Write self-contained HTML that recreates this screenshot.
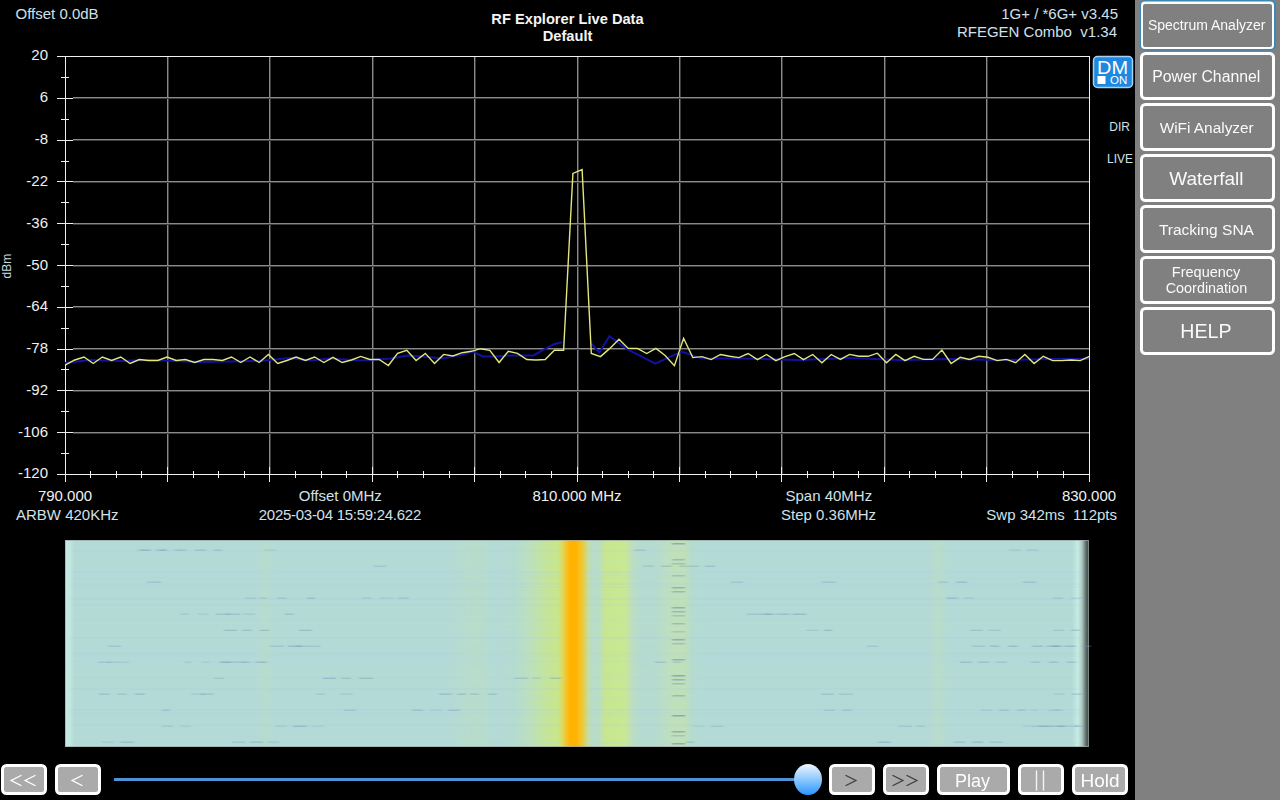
<!DOCTYPE html>
<html><head><meta charset="utf-8"><style>
html,body{margin:0;padding:0;background:#000;width:1280px;height:800px;overflow:hidden}
svg{display:block;font-family:"Liberation Sans",sans-serif}
text{white-space:pre}
</style></head><body>
<svg width="1280" height="800" viewBox="0 0 1280 800">
<defs>
<filter id="blur" x="-10%" y="-200%" width="120%" height="500%"><feGaussianBlur stdDeviation="1.2 0.5"/></filter>
<linearGradient id="wf" x1="0" x2="1" y1="0" y2="0"><stop offset="0.0" stop-color="#c4ece4"/><stop offset="0.0048828125" stop-color="#c0e8e0"/><stop offset="0.0087890625" stop-color="#b3dad6"/><stop offset="0.1865234375" stop-color="#b3dad6"/><stop offset="0.1953125" stop-color="#b6dcce"/><stop offset="0.2041015625" stop-color="#b3dad6"/><stop offset="0.3759765625" stop-color="#b3dad6"/><stop offset="0.3955078125" stop-color="#b8dccc"/><stop offset="0.4052734375" stop-color="#b8dccc"/><stop offset="0.419921875" stop-color="#b3dad6"/><stop offset="0.439453125" stop-color="#b5dbd0"/><stop offset="0.4541015625" stop-color="#bce0bc"/><stop offset="0.46875" stop-color="#c4e49c"/><stop offset="0.4814453125" stop-color="#c8e68a"/><stop offset="0.4853515625" stop-color="#dcdc60"/><stop offset="0.4892578125" stop-color="#f4c430"/><stop offset="0.4931640625" stop-color="#ffb400"/><stop offset="0.4990234375" stop-color="#ffb200"/><stop offset="0.5029296875" stop-color="#f8c020"/><stop offset="0.5068359375" stop-color="#e0d050"/><stop offset="0.5107421875" stop-color="#c8dca0"/><stop offset="0.5146484375" stop-color="#b8dcc8"/><stop offset="0.5205078125" stop-color="#b8dcc8"/><stop offset="0.52734375" stop-color="#c6e690"/><stop offset="0.546875" stop-color="#cae892"/><stop offset="0.5537109375" stop-color="#bcdec0"/><stop offset="0.5615234375" stop-color="#b5dbd0"/><stop offset="0.576171875" stop-color="#b5dbd0"/><stop offset="0.5927734375" stop-color="#bfe0bc"/><stop offset="0.6044921875" stop-color="#c0e0b8"/><stop offset="0.6123046875" stop-color="#b5dbd0"/><stop offset="0.625" stop-color="#b3dad6"/><stop offset="0.8427734375" stop-color="#b3dad6"/><stop offset="0.8525390625" stop-color="#b9ddca"/><stop offset="0.8623046875" stop-color="#b3dad6"/><stop offset="0.9833984375" stop-color="#b3dad6"/><stop offset="0.9892578125" stop-color="#c6ece4"/><stop offset="0.9931640625" stop-color="#a8c8c0"/><stop offset="0.9970703125" stop-color="#606c6a"/><stop offset="1.0" stop-color="#3a4240"/></linearGradient>
<linearGradient id="knob" x1="0" x2="0" y1="0" y2="1"><stop offset="0" stop-color="#eef6ff"/><stop offset="0.5" stop-color="#8cc8ff"/><stop offset="1" stop-color="#2a96ff"/></linearGradient>
</defs>
<rect x="0" y="0" width="1135" height="800" fill="#000"/>
<rect x="1135" y="0" width="145" height="800" fill="#808080"/>
<!-- header texts -->
<g font-size="15" fill="#d2e0ea">
<text x="15.5" y="19">Offset 0.0dB</text>
<text x="1118" y="19" text-anchor="end">1G+ / *6G+ v3.45</text>
<text x="1117" y="37" text-anchor="end">RFEGEN Combo  v1.34</text>
</g>
<g font-size="14.67" font-weight="bold" fill="#f4f4f4" text-anchor="middle">
<text x="567.5" y="24">RF Explorer Live Data</text>
<text x="567.5" y="40.5">Default</text>
</g>
<!-- grid -->
<rect x="167" y="57" width="1" height="417" fill="#8a8a8a"/><rect x="168" y="57" width="1" height="417" fill="#3c3c3c"/><rect x="269" y="57" width="1" height="417" fill="#8a8a8a"/><rect x="270" y="57" width="1" height="417" fill="#3c3c3c"/><rect x="372" y="57" width="1" height="417" fill="#8a8a8a"/><rect x="373" y="57" width="1" height="417" fill="#3c3c3c"/><rect x="474" y="57" width="1" height="417" fill="#8a8a8a"/><rect x="475" y="57" width="1" height="417" fill="#3c3c3c"/><rect x="577" y="57" width="1" height="417" fill="#8a8a8a"/><rect x="578" y="57" width="1" height="417" fill="#3c3c3c"/><rect x="679" y="57" width="1" height="417" fill="#8a8a8a"/><rect x="680" y="57" width="1" height="417" fill="#3c3c3c"/><rect x="781" y="57" width="1" height="417" fill="#8a8a8a"/><rect x="782" y="57" width="1" height="417" fill="#3c3c3c"/><rect x="884" y="57" width="1" height="417" fill="#8a8a8a"/><rect x="885" y="57" width="1" height="417" fill="#3c3c3c"/><rect x="986" y="57" width="1" height="417" fill="#8a8a8a"/><rect x="987" y="57" width="1" height="417" fill="#3c3c3c"/><rect x="73" y="97" width="1016" height="1" fill="#8a8a8a"/><rect x="73" y="98" width="1016" height="1" fill="#3c3c3c"/><rect x="73" y="139" width="1016" height="1" fill="#8a8a8a"/><rect x="73" y="140" width="1016" height="1" fill="#3c3c3c"/><rect x="73" y="181" width="1016" height="1" fill="#8a8a8a"/><rect x="73" y="182" width="1016" height="1" fill="#3c3c3c"/><rect x="73" y="223" width="1016" height="1" fill="#8a8a8a"/><rect x="73" y="224" width="1016" height="1" fill="#3c3c3c"/><rect x="73" y="265" width="1016" height="1" fill="#8a8a8a"/><rect x="73" y="266" width="1016" height="1" fill="#3c3c3c"/><rect x="73" y="306" width="1016" height="1" fill="#8a8a8a"/><rect x="73" y="307" width="1016" height="1" fill="#3c3c3c"/><rect x="73" y="348" width="1016" height="1" fill="#8a8a8a"/><rect x="73" y="349" width="1016" height="1" fill="#3c3c3c"/><rect x="73" y="390" width="1016" height="1" fill="#8a8a8a"/><rect x="73" y="391" width="1016" height="1" fill="#3c3c3c"/><rect x="73" y="432" width="1016" height="1" fill="#8a8a8a"/><rect x="73" y="433" width="1016" height="1" fill="#3c3c3c"/>
<g stroke="#f0f0f0" stroke-width="1">
<line x1="57" x2="1089.5" y1="56.5" y2="56.5"/>
<line x1="65.5" x2="65.5" y1="56" y2="482"/>
<line x1="65" x2="1089.5" y1="474.5" y2="474.5"/>
<line x1="1089.5" x2="1089.5" y1="56" y2="482"/>
<line x1="57" x2="73" y1="56.5" y2="56.5"/><line x1="61" x2="69" y1="77.5" y2="77.5"/><line x1="57" x2="73" y1="98.5" y2="98.5"/><line x1="61" x2="69" y1="119.5" y2="119.5"/><line x1="57" x2="73" y1="140.5" y2="140.5"/><line x1="61" x2="69" y1="161.5" y2="161.5"/><line x1="57" x2="73" y1="181.5" y2="181.5"/><line x1="61" x2="69" y1="202.5" y2="202.5"/><line x1="57" x2="73" y1="223.5" y2="223.5"/><line x1="61" x2="69" y1="244.5" y2="244.5"/><line x1="57" x2="73" y1="265.5" y2="265.5"/><line x1="61" x2="69" y1="286.5" y2="286.5"/><line x1="57" x2="73" y1="307.5" y2="307.5"/><line x1="61" x2="69" y1="328.5" y2="328.5"/><line x1="57" x2="73" y1="349.5" y2="349.5"/><line x1="61" x2="69" y1="369.5" y2="369.5"/><line x1="57" x2="73" y1="390.5" y2="390.5"/><line x1="61" x2="69" y1="411.5" y2="411.5"/><line x1="57" x2="73" y1="432.5" y2="432.5"/><line x1="61" x2="69" y1="453.5" y2="453.5"/><line x1="57" x2="73" y1="474.5" y2="474.5"/><line x1="65.5" x2="65.5" y1="467" y2="482"/><line x1="90.5" x2="90.5" y1="471" y2="478"/><line x1="116.5" x2="116.5" y1="471" y2="478"/><line x1="141.5" x2="141.5" y1="471" y2="478"/><line x1="167.5" x2="167.5" y1="467" y2="482"/><line x1="193.5" x2="193.5" y1="471" y2="478"/><line x1="218.5" x2="218.5" y1="471" y2="478"/><line x1="244.5" x2="244.5" y1="471" y2="478"/><line x1="269.5" x2="269.5" y1="467" y2="482"/><line x1="295.5" x2="295.5" y1="471" y2="478"/><line x1="321.5" x2="321.5" y1="471" y2="478"/><line x1="346.5" x2="346.5" y1="471" y2="478"/><line x1="372.5" x2="372.5" y1="467" y2="482"/><line x1="397.5" x2="397.5" y1="471" y2="478"/><line x1="423.5" x2="423.5" y1="471" y2="478"/><line x1="449.5" x2="449.5" y1="471" y2="478"/><line x1="474.5" x2="474.5" y1="467" y2="482"/><line x1="500.5" x2="500.5" y1="471" y2="478"/><line x1="525.5" x2="525.5" y1="471" y2="478"/><line x1="551.5" x2="551.5" y1="471" y2="478"/><line x1="577.5" x2="577.5" y1="467" y2="482"/><line x1="602.5" x2="602.5" y1="471" y2="478"/><line x1="628.5" x2="628.5" y1="471" y2="478"/><line x1="653.5" x2="653.5" y1="471" y2="478"/><line x1="679.5" x2="679.5" y1="467" y2="482"/><line x1="705.5" x2="705.5" y1="471" y2="478"/><line x1="730.5" x2="730.5" y1="471" y2="478"/><line x1="756.5" x2="756.5" y1="471" y2="478"/><line x1="781.5" x2="781.5" y1="467" y2="482"/><line x1="807.5" x2="807.5" y1="471" y2="478"/><line x1="833.5" x2="833.5" y1="471" y2="478"/><line x1="858.5" x2="858.5" y1="471" y2="478"/><line x1="884.5" x2="884.5" y1="467" y2="482"/><line x1="909.5" x2="909.5" y1="471" y2="478"/><line x1="935.5" x2="935.5" y1="471" y2="478"/><line x1="961.5" x2="961.5" y1="471" y2="478"/><line x1="986.5" x2="986.5" y1="467" y2="482"/><line x1="1012.5" x2="1012.5" y1="471" y2="478"/><line x1="1037.5" x2="1037.5" y1="471" y2="478"/><line x1="1063.5" x2="1063.5" y1="471" y2="478"/><line x1="1089.5" x2="1089.5" y1="467" y2="482"/>
</g>
<polyline points="65.0,363.0 90.0,360.0 120.0,361.0 150.0,360.0 200.0,362.0 260.0,361.0 290.0,358.0 310.0,360.5 330.0,358.4 360.8,360.5 391.0,358.4 407.5,355.4 423.7,356.4 442.0,358.4 464.4,354.4 472.5,351.3 482.7,356.4 492.8,356.4 513.0,355.4 533.4,355.4 553.8,344.2 561.9,342.2" fill="none" stroke="#1212a0" stroke-width="2"/><polyline points="591.2,343.4 599.3,352.5 609.5,336.3 627.7,349.5 655.2,363.7 681.6,351.5 701.9,358.6 742.5,358.6 800.0,360.0 850.0,358.0 900.0,360.0 950.0,359.0 1000.0,360.0 1050.0,359.0 1089.0,359.0" fill="none" stroke="#1212a0" stroke-width="2"/>
<polyline points="65.5,364.9 74.7,360.0 84.0,357.0 93.2,363.5 102.4,357.0 111.6,360.5 120.8,357.0 130.1,363.5 139.3,359.5 148.5,360.5 157.8,360.5 167.0,357.0 176.2,360.5 185.4,359.5 194.7,362.5 203.9,359.5 213.1,359.5 222.3,360.5 231.5,357.0 240.8,362.5 250.0,357.0 259.2,362.5 268.4,354.4 277.7,363.5 286.9,360.5 296.1,357.0 305.4,360.5 314.6,357.0 323.8,362.5 333.0,357.4 342.2,362.5 351.5,360.0 360.7,356.4 369.9,359.5 379.1,359.5 388.4,365.5 397.6,353.4 406.8,350.3 416.1,360.5 425.3,353.4 434.5,363.5 443.7,354.4 452.9,356.0 462.2,352.7 471.4,351.3 480.6,348.7 489.8,350.3 499.1,362.5 508.3,351.3 517.5,353.4 526.8,359.5 536.0,360.0 545.2,359.5 554.4,350.3 563.6,350.3 572.9,173.4 582.1,169.5 591.3,353.5 600.5,356.6 609.8,348.4 619.0,339.3 628.2,348.4 637.4,348.4 646.7,353.5 655.9,348.4 665.1,355.5 674.4,365.7 683.6,338.3 692.8,357.6 702.0,356.6 711.2,359.6 720.5,354.5 729.7,356.2 738.9,357.6 748.1,353.5 757.4,359.6 766.6,354.5 775.8,360.6 785.0,356.6 794.3,353.5 803.5,359.6 812.7,354.5 821.9,362.7 831.2,354.5 840.4,359.4 849.6,354.4 858.9,356.3 868.1,356.3 877.3,353.2 886.5,362.7 895.8,354.4 905.0,360.6 914.2,356.3 923.4,359.4 932.6,359.4 941.9,350.1 951.1,363.5 960.3,357.3 969.5,359.4 978.8,356.3 988.0,357.3 997.2,360.6 1006.4,359.4 1015.7,362.7 1024.9,354.4 1034.1,363.5 1043.3,356.3 1052.6,360.6 1061.8,360.6 1071.0,360.0 1080.2,360.6 1089.5,356.3" fill="none" stroke="#e2e67c" stroke-width="1.4"/>
<g font-size="15" fill="#f0f0f0">
<text x="48" y="60" text-anchor="end">20</text><text x="48" y="102" text-anchor="end">6</text><text x="48" y="144" text-anchor="end">-8</text><text x="48" y="186" text-anchor="end">-22</text><text x="48" y="228" text-anchor="end">-36</text><text x="48" y="270" text-anchor="end">-50</text><text x="48" y="311" text-anchor="end">-64</text><text x="48" y="353" text-anchor="end">-78</text><text x="48" y="395" text-anchor="end">-92</text><text x="48" y="437" text-anchor="end">-106</text><text x="48" y="478" text-anchor="end">-120</text>
</g>
<text x="0" y="0" font-size="12" fill="#c8d8e0" transform="translate(11,278.5) rotate(-90)">dBm</text>
<!-- DM badge -->
<rect x="1093.5" y="56.5" width="39" height="31" rx="4" fill="#1e88e0" stroke="#a8d0f0" stroke-width="1.5"/>
<text x="1097" y="73.5" font-size="19" fill="#fff" textLength="31" lengthAdjust="spacingAndGlyphs">DM</text>
<rect x="1097.5" y="76" width="8" height="8" fill="#fff"/>
<text x="1110" y="84" font-size="11.5" fill="#fff">ON</text>
<g font-size="12" fill="#d0e0ea">
<text x="1130" y="131" text-anchor="end">DIR</text>
<text x="1133" y="163" text-anchor="end">LIVE</text>
</g>
<!-- x labels -->
<g font-size="15">
<text x="65" y="501" text-anchor="middle" fill="#f0f0f0">790.000</text>
<text x="577" y="501" text-anchor="middle" fill="#f0f0f0">810.000 MHz</text>
<text x="1089" y="501" text-anchor="middle" fill="#f0f0f0">830.000</text>
<text x="340.3" y="501" text-anchor="middle" fill="#d2e0ea">Offset 0MHz</text>
<text x="828.8" y="501" text-anchor="middle" fill="#d2e0ea">Span 40MHz</text>
<text x="16" y="520" fill="#d2e0ea">ARBW 420KHz</text>
<text x="340" y="520" text-anchor="middle" fill="#d2e0ea" textLength="162.5" lengthAdjust="spacing">2025-03-04 15:59:24.622</text>
<text x="828.6" y="520" text-anchor="middle" fill="#d2e0ea">Step 0.36MHz</text>
<text x="1117" y="520" text-anchor="end" fill="#d2e0ea">Swp 342ms  112pts</text>
</g>
<!-- waterfall -->
<rect x="65" y="540" width="1024" height="207" fill="url(#wf)"/>
<g filter="url(#blur)"><rect x="1009" y="549.5" width="12" height="1.5" fill="#7098bc" opacity="0.22"/><rect x="1027" y="549.5" width="11" height="1.5" fill="#7098bc" opacity="0.29"/><rect x="137" y="549.5" width="9" height="1.5" fill="#7098bc" opacity="0.22"/><rect x="155" y="549.5" width="11" height="1.5" fill="#7098bc" opacity="0.26"/><rect x="173" y="549.5" width="11" height="1.5" fill="#7098bc" opacity="0.21"/><rect x="634" y="549.5" width="12" height="1.5" fill="#7098bc" opacity="0.35"/><rect x="141" y="549.5" width="10" height="1.5" fill="#7098bc" opacity="0.44"/><rect x="159" y="549.5" width="8" height="1.5" fill="#7098bc" opacity="0.41"/><rect x="177" y="549.5" width="10" height="1.5" fill="#7098bc" opacity="0.24"/><rect x="195" y="549.5" width="11" height="1.5" fill="#7098bc" opacity="0.37"/><rect x="213" y="549.5" width="9" height="1.5" fill="#7098bc" opacity="0.34"/><rect x="264" y="549.5" width="11" height="1.5" fill="#7098bc" opacity="0.22"/><rect x="687" y="565.5" width="12" height="1.5" fill="#7098bc" opacity="0.31"/><rect x="705" y="565.5" width="10" height="1.5" fill="#7098bc" opacity="0.35"/><rect x="374" y="565.5" width="12" height="1.5" fill="#7098bc" opacity="0.26"/><rect x="643" y="565.5" width="11" height="1.5" fill="#7098bc" opacity="0.29"/><rect x="661" y="565.5" width="11" height="1.5" fill="#7098bc" opacity="0.35"/><rect x="679" y="565.5" width="8" height="1.5" fill="#7098bc" opacity="0.33"/><rect x="822" y="581.5" width="14" height="1.5" fill="#7098bc" opacity="0.31"/><rect x="1023" y="581.5" width="13" height="1.5" fill="#7098bc" opacity="0.34"/><rect x="938" y="581.5" width="10" height="1.5" fill="#7098bc" opacity="0.29"/><rect x="956" y="581.5" width="11" height="1.5" fill="#7098bc" opacity="0.40"/><rect x="147" y="581.5" width="14" height="1.5" fill="#7098bc" opacity="0.32"/><rect x="731" y="581.5" width="12" height="1.5" fill="#7098bc" opacity="0.28"/><rect x="1053" y="597.5" width="10" height="1.5" fill="#7098bc" opacity="0.30"/><rect x="1071" y="597.5" width="12" height="1.5" fill="#7098bc" opacity="0.21"/><rect x="245" y="597.5" width="11" height="1.5" fill="#7098bc" opacity="0.25"/><rect x="362" y="597.5" width="9" height="1.5" fill="#7098bc" opacity="0.30"/><rect x="380" y="597.5" width="13" height="1.5" fill="#7098bc" opacity="0.22"/><rect x="398" y="597.5" width="11" height="1.5" fill="#7098bc" opacity="0.34"/><rect x="946" y="597.5" width="13" height="1.5" fill="#7098bc" opacity="0.27"/><rect x="964" y="597.5" width="10" height="1.5" fill="#7098bc" opacity="0.29"/><rect x="947" y="597.5" width="9" height="1.5" fill="#7098bc" opacity="0.24"/><rect x="307" y="597.5" width="8" height="1.5" fill="#7098bc" opacity="0.41"/><rect x="259" y="597.5" width="8" height="1.5" fill="#7098bc" opacity="0.30"/><rect x="277" y="597.5" width="10" height="1.5" fill="#7098bc" opacity="0.34"/><rect x="757" y="613.5" width="14" height="1.5" fill="#7098bc" opacity="0.36"/><rect x="775" y="613.5" width="12" height="1.5" fill="#7098bc" opacity="0.31"/><rect x="793" y="613.5" width="13" height="1.5" fill="#7098bc" opacity="0.44"/><rect x="747" y="613.5" width="10" height="1.5" fill="#7098bc" opacity="0.30"/><rect x="765" y="613.5" width="9" height="1.5" fill="#7098bc" opacity="0.36"/><rect x="783" y="613.5" width="8" height="1.5" fill="#7098bc" opacity="0.22"/><rect x="285" y="613.5" width="9" height="1.5" fill="#7098bc" opacity="0.35"/><rect x="180" y="613.5" width="9" height="1.5" fill="#7098bc" opacity="0.23"/><rect x="198" y="613.5" width="10" height="1.5" fill="#7098bc" opacity="0.21"/><rect x="216" y="613.5" width="13" height="1.5" fill="#7098bc" opacity="0.35"/><rect x="226" y="613.5" width="14" height="1.5" fill="#7098bc" opacity="0.35"/><rect x="244" y="613.5" width="11" height="1.5" fill="#7098bc" opacity="0.23"/><rect x="1053" y="629.5" width="11" height="1.5" fill="#7098bc" opacity="0.28"/><rect x="1071" y="629.5" width="9" height="1.5" fill="#7098bc" opacity="0.39"/><rect x="806" y="629.5" width="13" height="1.5" fill="#7098bc" opacity="0.24"/><rect x="824" y="629.5" width="8" height="1.5" fill="#7098bc" opacity="0.44"/><rect x="224" y="629.5" width="13" height="1.5" fill="#7098bc" opacity="0.39"/><rect x="242" y="629.5" width="10" height="1.5" fill="#7098bc" opacity="0.36"/><rect x="260" y="629.5" width="9" height="1.5" fill="#7098bc" opacity="0.41"/><rect x="970" y="629.5" width="13" height="1.5" fill="#7098bc" opacity="0.33"/><rect x="988" y="629.5" width="13" height="1.5" fill="#7098bc" opacity="0.28"/><rect x="299" y="629.5" width="13" height="1.5" fill="#7098bc" opacity="0.40"/><rect x="867" y="645.5" width="11" height="1.5" fill="#7098bc" opacity="0.29"/><rect x="108" y="645.5" width="13" height="1.5" fill="#7098bc" opacity="0.32"/><rect x="270" y="645.5" width="14" height="1.5" fill="#7098bc" opacity="0.31"/><rect x="288" y="645.5" width="14" height="1.5" fill="#7098bc" opacity="0.45"/><rect x="306" y="645.5" width="14" height="1.5" fill="#7098bc" opacity="0.29"/><rect x="296" y="645.5" width="11" height="1.5" fill="#7098bc" opacity="0.28"/><rect x="1046" y="645.5" width="13" height="1.5" fill="#7098bc" opacity="0.32"/><rect x="1064" y="645.5" width="12" height="1.5" fill="#7098bc" opacity="0.40"/><rect x="1082" y="645.5" width="9" height="1.5" fill="#7098bc" opacity="0.37"/><rect x="972" y="645.5" width="13" height="1.5" fill="#7098bc" opacity="0.32"/><rect x="990" y="645.5" width="9" height="1.5" fill="#7098bc" opacity="0.40"/><rect x="1008" y="645.5" width="10" height="1.5" fill="#7098bc" opacity="0.40"/><rect x="1032" y="645.5" width="11" height="1.5" fill="#7098bc" opacity="0.39"/><rect x="1050" y="645.5" width="9" height="1.5" fill="#7098bc" opacity="0.24"/><rect x="1053" y="645.5" width="9" height="1.5" fill="#7098bc" opacity="0.43"/><rect x="223" y="661.5" width="14" height="1.5" fill="#7098bc" opacity="0.36"/><rect x="241" y="661.5" width="10" height="1.5" fill="#7098bc" opacity="0.34"/><rect x="259" y="661.5" width="9" height="1.5" fill="#7098bc" opacity="0.20"/><rect x="1031" y="661.5" width="9" height="1.5" fill="#7098bc" opacity="0.39"/><rect x="1049" y="661.5" width="9" height="1.5" fill="#7098bc" opacity="0.45"/><rect x="1067" y="661.5" width="9" height="1.5" fill="#7098bc" opacity="0.42"/><rect x="107" y="661.5" width="10" height="1.5" fill="#7098bc" opacity="0.26"/><rect x="655" y="661.5" width="11" height="1.5" fill="#7098bc" opacity="0.41"/><rect x="673" y="661.5" width="8" height="1.5" fill="#7098bc" opacity="0.38"/><rect x="960" y="661.5" width="12" height="1.5" fill="#7098bc" opacity="0.43"/><rect x="978" y="661.5" width="11" height="1.5" fill="#7098bc" opacity="0.43"/><rect x="996" y="661.5" width="11" height="1.5" fill="#7098bc" opacity="0.33"/><rect x="98" y="661.5" width="13" height="1.5" fill="#7098bc" opacity="0.35"/><rect x="116" y="661.5" width="13" height="1.5" fill="#7098bc" opacity="0.24"/><rect x="219" y="661.5" width="12" height="1.5" fill="#7098bc" opacity="0.34"/><rect x="237" y="661.5" width="10" height="1.5" fill="#7098bc" opacity="0.33"/><rect x="255" y="661.5" width="11" height="1.5" fill="#7098bc" opacity="0.40"/><rect x="184" y="661.5" width="8" height="1.5" fill="#7098bc" opacity="0.25"/><rect x="202" y="661.5" width="8" height="1.5" fill="#7098bc" opacity="0.22"/><rect x="220" y="661.5" width="11" height="1.5" fill="#7098bc" opacity="0.21"/><rect x="514" y="677.5" width="14" height="1.5" fill="#7098bc" opacity="0.35"/><rect x="532" y="677.5" width="9" height="1.5" fill="#7098bc" opacity="0.27"/><rect x="550" y="677.5" width="11" height="1.5" fill="#7098bc" opacity="0.40"/><rect x="323" y="677.5" width="13" height="1.5" fill="#7098bc" opacity="0.44"/><rect x="341" y="677.5" width="10" height="1.5" fill="#7098bc" opacity="0.34"/><rect x="359" y="677.5" width="14" height="1.5" fill="#7098bc" opacity="0.41"/><rect x="214" y="677.5" width="10" height="1.5" fill="#7098bc" opacity="0.28"/><rect x="316" y="693.5" width="9" height="1.5" fill="#7098bc" opacity="0.28"/><rect x="200" y="693.5" width="14" height="1.5" fill="#7098bc" opacity="0.36"/><rect x="439" y="693.5" width="13" height="1.5" fill="#7098bc" opacity="0.44"/><rect x="457" y="693.5" width="9" height="1.5" fill="#7098bc" opacity="0.44"/><rect x="470" y="693.5" width="9" height="1.5" fill="#7098bc" opacity="0.37"/><rect x="488" y="693.5" width="9" height="1.5" fill="#7098bc" opacity="0.38"/><rect x="1054" y="693.5" width="10" height="1.5" fill="#7098bc" opacity="0.25"/><rect x="1072" y="693.5" width="10" height="1.5" fill="#7098bc" opacity="0.38"/><rect x="99" y="693.5" width="11" height="1.5" fill="#7098bc" opacity="0.38"/><rect x="117" y="693.5" width="10" height="1.5" fill="#7098bc" opacity="0.33"/><rect x="135" y="693.5" width="10" height="1.5" fill="#7098bc" opacity="0.44"/><rect x="191" y="693.5" width="14" height="1.5" fill="#7098bc" opacity="0.23"/><rect x="340" y="693.5" width="13" height="1.5" fill="#7098bc" opacity="0.25"/><rect x="821" y="693.5" width="13" height="1.5" fill="#7098bc" opacity="0.37"/><rect x="839" y="693.5" width="14" height="1.5" fill="#7098bc" opacity="0.30"/><rect x="981" y="709.5" width="11" height="1.5" fill="#7098bc" opacity="0.28"/><rect x="999" y="709.5" width="10" height="1.5" fill="#7098bc" opacity="0.40"/><rect x="1017" y="709.5" width="9" height="1.5" fill="#7098bc" opacity="0.42"/><rect x="344" y="709.5" width="12" height="1.5" fill="#7098bc" opacity="0.40"/><rect x="162" y="709.5" width="8" height="1.5" fill="#7098bc" opacity="0.42"/><rect x="412" y="709.5" width="11" height="1.5" fill="#7098bc" opacity="0.43"/><rect x="430" y="709.5" width="12" height="1.5" fill="#7098bc" opacity="0.21"/><rect x="448" y="709.5" width="12" height="1.5" fill="#7098bc" opacity="0.43"/><rect x="1030" y="709.5" width="8" height="1.5" fill="#7098bc" opacity="0.25"/><rect x="1048" y="709.5" width="10" height="1.5" fill="#7098bc" opacity="0.28"/><rect x="824" y="709.5" width="11" height="1.5" fill="#7098bc" opacity="0.37"/><rect x="842" y="709.5" width="10" height="1.5" fill="#7098bc" opacity="0.40"/><rect x="1055" y="709.5" width="8" height="1.5" fill="#7098bc" opacity="0.38"/><rect x="1038" y="725.5" width="11" height="1.5" fill="#7098bc" opacity="0.43"/><rect x="1056" y="725.5" width="9" height="1.5" fill="#7098bc" opacity="0.40"/><rect x="1074" y="725.5" width="11" height="1.5" fill="#7098bc" opacity="0.32"/><rect x="898" y="725.5" width="14" height="1.5" fill="#7098bc" opacity="0.28"/><rect x="916" y="725.5" width="9" height="1.5" fill="#7098bc" opacity="0.26"/><rect x="275" y="725.5" width="12" height="1.5" fill="#7098bc" opacity="0.23"/><rect x="293" y="725.5" width="14" height="1.5" fill="#7098bc" opacity="0.45"/><rect x="311" y="725.5" width="13" height="1.5" fill="#7098bc" opacity="0.20"/><rect x="693" y="725.5" width="11" height="1.5" fill="#7098bc" opacity="0.21"/><rect x="711" y="725.5" width="12" height="1.5" fill="#7098bc" opacity="0.30"/><rect x="1032" y="725.5" width="9" height="1.5" fill="#7098bc" opacity="0.27"/><rect x="1050" y="725.5" width="11" height="1.5" fill="#7098bc" opacity="0.24"/><rect x="1068" y="725.5" width="11" height="1.5" fill="#7098bc" opacity="0.27"/><rect x="1023" y="725.5" width="10" height="1.5" fill="#7098bc" opacity="0.21"/><rect x="1041" y="725.5" width="13" height="1.5" fill="#7098bc" opacity="0.25"/><rect x="1059" y="725.5" width="9" height="1.5" fill="#7098bc" opacity="0.28"/><rect x="162" y="725.5" width="11" height="1.5" fill="#7098bc" opacity="0.25"/><rect x="180" y="725.5" width="11" height="1.5" fill="#7098bc" opacity="0.20"/><rect x="881" y="741.5" width="10" height="1.5" fill="#7098bc" opacity="0.21"/><rect x="102" y="741.5" width="12" height="1.5" fill="#7098bc" opacity="0.22"/><rect x="120" y="741.5" width="14" height="1.5" fill="#7098bc" opacity="0.41"/><rect x="232" y="741.5" width="13" height="1.5" fill="#7098bc" opacity="0.35"/><rect x="250" y="741.5" width="13" height="1.5" fill="#7098bc" opacity="0.38"/><rect x="268" y="741.5" width="11" height="1.5" fill="#7098bc" opacity="0.27"/><rect x="686" y="741.5" width="8" height="1.5" fill="#7098bc" opacity="0.41"/><rect x="954" y="741.5" width="11" height="1.5" fill="#7098bc" opacity="0.38"/><rect x="972" y="741.5" width="11" height="1.5" fill="#7098bc" opacity="0.43"/><rect x="990" y="741.5" width="13" height="1.5" fill="#7098bc" opacity="0.34"/><rect x="877" y="741.5" width="13" height="1.5" fill="#7098bc" opacity="0.35"/><rect x="70" y="550" width="492" height="2" fill="#a8cce0" opacity="0.09"/><rect x="586" y="550" width="494" height="2" fill="#a8cce0" opacity="0.09"/><rect x="70" y="559" width="492" height="2" fill="#c0e4c8" opacity="0.16"/><rect x="586" y="559" width="494" height="2" fill="#c0e4c8" opacity="0.16"/><rect x="70" y="571" width="492" height="2" fill="#a8cce0" opacity="0.14"/><rect x="586" y="571" width="494" height="2" fill="#a8cce0" opacity="0.14"/><rect x="70" y="574" width="492" height="2" fill="#b0d8e4" opacity="0.21"/><rect x="586" y="574" width="494" height="2" fill="#b0d8e4" opacity="0.21"/><rect x="70" y="577" width="492" height="2" fill="#b0d8e4" opacity="0.09"/><rect x="586" y="577" width="494" height="2" fill="#b0d8e4" opacity="0.09"/><rect x="70" y="583" width="492" height="2" fill="#a8cce0" opacity="0.20"/><rect x="586" y="583" width="494" height="2" fill="#a8cce0" opacity="0.20"/><rect x="70" y="586" width="492" height="2" fill="#a8cce0" opacity="0.11"/><rect x="586" y="586" width="494" height="2" fill="#a8cce0" opacity="0.11"/><rect x="70" y="592" width="492" height="2" fill="#c0e4c8" opacity="0.09"/><rect x="586" y="592" width="494" height="2" fill="#c0e4c8" opacity="0.09"/><rect x="70" y="598" width="492" height="2" fill="#a8cce0" opacity="0.17"/><rect x="586" y="598" width="494" height="2" fill="#a8cce0" opacity="0.17"/><rect x="70" y="604" width="492" height="2" fill="#a8cce0" opacity="0.13"/><rect x="586" y="604" width="494" height="2" fill="#a8cce0" opacity="0.13"/><rect x="70" y="616" width="492" height="2" fill="#c0e4c8" opacity="0.09"/><rect x="586" y="616" width="494" height="2" fill="#c0e4c8" opacity="0.09"/><rect x="70" y="619" width="492" height="2" fill="#b0d8e4" opacity="0.09"/><rect x="586" y="619" width="494" height="2" fill="#b0d8e4" opacity="0.09"/><rect x="70" y="622" width="492" height="2" fill="#c0e4c8" opacity="0.12"/><rect x="586" y="622" width="494" height="2" fill="#c0e4c8" opacity="0.12"/><rect x="70" y="628" width="492" height="2" fill="#c0e4c8" opacity="0.19"/><rect x="586" y="628" width="494" height="2" fill="#c0e4c8" opacity="0.19"/><rect x="70" y="637" width="492" height="2" fill="#a8cce0" opacity="0.21"/><rect x="586" y="637" width="494" height="2" fill="#a8cce0" opacity="0.21"/><rect x="70" y="640" width="492" height="2" fill="#c0e4c8" opacity="0.09"/><rect x="586" y="640" width="494" height="2" fill="#c0e4c8" opacity="0.09"/><rect x="70" y="652" width="492" height="2" fill="#a8cce0" opacity="0.09"/><rect x="586" y="652" width="494" height="2" fill="#a8cce0" opacity="0.09"/><rect x="70" y="655" width="492" height="2" fill="#b0d8e4" opacity="0.15"/><rect x="586" y="655" width="494" height="2" fill="#b0d8e4" opacity="0.15"/><rect x="70" y="661" width="492" height="2" fill="#b0d8e4" opacity="0.15"/><rect x="586" y="661" width="494" height="2" fill="#b0d8e4" opacity="0.15"/><rect x="70" y="670" width="492" height="2" fill="#c0e4c8" opacity="0.14"/><rect x="586" y="670" width="494" height="2" fill="#c0e4c8" opacity="0.14"/><rect x="70" y="673" width="492" height="2" fill="#c0e4c8" opacity="0.18"/><rect x="586" y="673" width="494" height="2" fill="#c0e4c8" opacity="0.18"/><rect x="70" y="676" width="492" height="2" fill="#b0d8e4" opacity="0.10"/><rect x="586" y="676" width="494" height="2" fill="#b0d8e4" opacity="0.10"/><rect x="70" y="679" width="492" height="2" fill="#c0e4c8" opacity="0.10"/><rect x="586" y="679" width="494" height="2" fill="#c0e4c8" opacity="0.10"/><rect x="70" y="682" width="492" height="2" fill="#c0e4c8" opacity="0.19"/><rect x="586" y="682" width="494" height="2" fill="#c0e4c8" opacity="0.19"/><rect x="70" y="688" width="492" height="2" fill="#a8cce0" opacity="0.18"/><rect x="586" y="688" width="494" height="2" fill="#a8cce0" opacity="0.18"/><rect x="70" y="694" width="492" height="2" fill="#c0e4c8" opacity="0.09"/><rect x="586" y="694" width="494" height="2" fill="#c0e4c8" opacity="0.09"/><rect x="70" y="697" width="492" height="2" fill="#b0d8e4" opacity="0.09"/><rect x="586" y="697" width="494" height="2" fill="#b0d8e4" opacity="0.09"/><rect x="70" y="709" width="492" height="2" fill="#a8cce0" opacity="0.20"/><rect x="586" y="709" width="494" height="2" fill="#a8cce0" opacity="0.20"/><rect x="70" y="712" width="492" height="2" fill="#a8cce0" opacity="0.11"/><rect x="586" y="712" width="494" height="2" fill="#a8cce0" opacity="0.11"/><rect x="70" y="715" width="492" height="2" fill="#b0d8e4" opacity="0.12"/><rect x="586" y="715" width="494" height="2" fill="#b0d8e4" opacity="0.12"/><rect x="70" y="724" width="492" height="2" fill="#a8cce0" opacity="0.19"/><rect x="586" y="724" width="494" height="2" fill="#a8cce0" opacity="0.19"/><rect x="70" y="742" width="492" height="2" fill="#b0d8e4" opacity="0.14"/><rect x="586" y="742" width="494" height="2" fill="#b0d8e4" opacity="0.14"/><rect x="672" y="543" width="13" height="1.5" fill="#6880b0" opacity="0.55"/><rect x="672" y="559" width="13" height="1.5" fill="#6880b0" opacity="0.40"/><rect x="672" y="563" width="13" height="1.5" fill="#6880b0" opacity="0.34"/><rect x="672" y="575" width="13" height="1.5" fill="#6880b0" opacity="0.33"/><rect x="672" y="587" width="13" height="1.5" fill="#6880b0" opacity="0.48"/><rect x="672" y="591" width="13" height="1.5" fill="#6880b0" opacity="0.43"/><rect x="672" y="607" width="13" height="1.5" fill="#6880b0" opacity="0.52"/><rect x="672" y="611" width="13" height="1.5" fill="#6880b0" opacity="0.44"/><rect x="672" y="615" width="13" height="1.5" fill="#6880b0" opacity="0.31"/><rect x="672" y="623" width="13" height="1.5" fill="#6880b0" opacity="0.38"/><rect x="672" y="631" width="13" height="1.5" fill="#6880b0" opacity="0.26"/><rect x="672" y="639" width="13" height="1.5" fill="#6880b0" opacity="0.51"/><rect x="672" y="643" width="13" height="1.5" fill="#6880b0" opacity="0.34"/><rect x="672" y="659" width="13" height="1.5" fill="#6880b0" opacity="0.49"/><rect x="672" y="675" width="13" height="1.5" fill="#6880b0" opacity="0.56"/><rect x="672" y="679" width="13" height="1.5" fill="#6880b0" opacity="0.48"/><rect x="672" y="683" width="13" height="1.5" fill="#6880b0" opacity="0.36"/><rect x="672" y="695" width="13" height="1.5" fill="#6880b0" opacity="0.40"/><rect x="672" y="715" width="13" height="1.5" fill="#6880b0" opacity="0.58"/><rect x="672" y="731" width="13" height="1.5" fill="#6880b0" opacity="0.52"/><rect x="672" y="735" width="13" height="1.5" fill="#6880b0" opacity="0.30"/><rect x="672" y="743" width="13" height="1.5" fill="#6880b0" opacity="0.54"/></g>
<rect x="65.5" y="540.5" width="1023" height="206" fill="none" stroke="#9aa8a6" stroke-width="1" opacity="0.7"/>
<!-- slider -->
<rect x="114" y="778" width="690" height="3" fill="#4f93d6"/>
<ellipse cx="808" cy="779.5" rx="14" ry="15.5" fill="url(#knob)"/>
<!-- bottom buttons -->
<g stroke="#fff" stroke-width="3" fill="#aaaaaa">
<rect x="2.5" y="765.5" width="43" height="28" rx="4"/>
<rect x="56.5" y="765.5" width="43" height="28" rx="4"/>
<rect x="830.5" y="765.5" width="43" height="28" rx="4"/>
<rect x="884.5" y="765.5" width="43" height="28" rx="4"/>
<rect x="938.5" y="765.5" width="70" height="28" rx="4"/>
<rect x="1019.5" y="765.5" width="43" height="28" rx="4"/>
<rect x="1073.5" y="765.5" width="53" height="28" rx="4"/>
</g>
<g fill="none" stroke-width="1.4" stroke-linecap="round" stroke-linejoin="miter">
<polyline points="21,775.5 11.2,780.5 21,785.5" stroke="#fff"/>
<polyline points="35,775.5 25.2,780.5 35,785.5" stroke="#fff"/>
<polyline points="82,775.5 72.2,780.5 82,785.5" stroke="#fff"/>
<polyline points="846,775.5 855.8,780.5 846,785.5" stroke="#404040"/>
<polyline points="893,775.5 902.8,780.5 893,785.5" stroke="#404040"/>
<polyline points="907,775.5 916.8,780.5 907,785.5" stroke="#404040"/>
<line x1="1036.5" x2="1036.5" y1="771" y2="790" stroke="#f4f4f4"/>
<line x1="1043.5" x2="1043.5" y1="771" y2="790" stroke="#f4f4f4"/>
</g>
<g font-size="19" text-anchor="middle">
<text x="972.5" y="786.5" fill="#fff" font-size="18">Play</text>
<text x="1100" y="787" fill="#fff">Hold</text>
</g>
<!-- right panel buttons -->
<g stroke="#fff" stroke-width="3" fill="#808080">
<rect x="1141.5" y="53.5" width="132" height="45" rx="4"/>
<rect x="1141.5" y="104.5" width="132" height="45" rx="4"/>
<rect x="1141.5" y="155.5" width="132" height="45" rx="4"/>
<rect x="1141.5" y="206.5" width="132" height="45" rx="4"/>
<rect x="1141.5" y="257.5" width="132" height="45" rx="4"/>
<rect x="1141.5" y="308.5" width="132" height="45" rx="4"/>
</g>
<rect x="1140" y="0" width="136" height="50.5" rx="5" fill="#3a88b8"/>
<rect x="1141" y="1.5" width="133" height="47.5" rx="4" fill="#fff"/>
<rect x="1143" y="4" width="129" height="43" rx="2" fill="#808080"/>
<g fill="#fafafa" text-anchor="middle">
<text x="1206.7" y="30" font-size="14">Spectrum Analyzer</text>
<text x="1206.3" y="82" font-size="15.8">Power Channel</text>
<text x="1206.7" y="133" font-size="15.4">WiFi Analyzer</text>
<text x="1206.4" y="185" font-size="19">Waterfall</text>
<text x="1206.4" y="235" font-size="15.5">Tracking SNA</text>
<text x="1206.1" y="276.5" font-size="14.5">Frequency</text>
<text x="1206.5" y="293" font-size="14.4">Coordination</text>
<text x="1205.9" y="338" font-size="19.6">HELP</text>
</g>
</svg>
</body></html>
